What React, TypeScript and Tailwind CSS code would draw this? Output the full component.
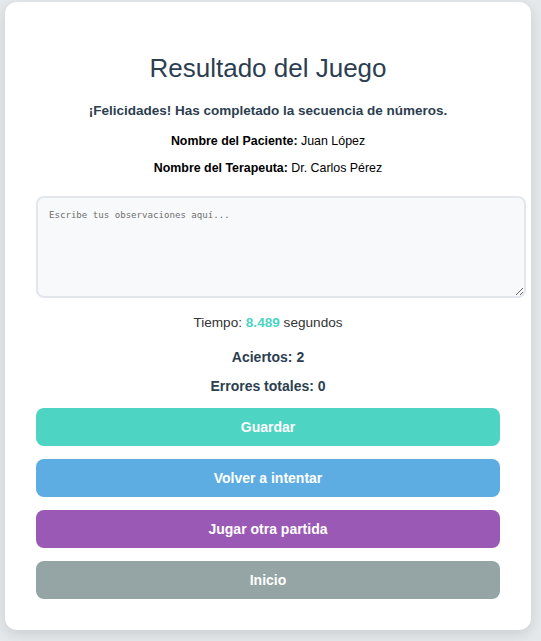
const buttons = [
  { label: "Guardar", cls: "bg-[#4dd4c3]" },
  { label: "Volver a intentar", cls: "bg-[#5dade2]" },
  { label: "Jugar otra partida", cls: "bg-[#9b59b6]" },
  { label: "Inicio", cls: "bg-[#95a5a6]" },
];

const App = () => {
  return (
    <div className="min-h-screen bg-[#e6e9ec] pl-[5px] pr-[10px] pt-[2px] font-['Liberation_Sans',Arial,sans-serif]">
      <div className="w-[526px] rounded-[12px] bg-white pl-[31px] pr-[31px] pt-[51px] pb-[31px] shadow-[0_4px_14px_rgba(0,0,0,0.12)]">
        <h2 className="text-center text-[26px] leading-[30px] text-[#2c3e50]">
          Resultado del Juego
        </h2>
        <p className="mt-[18px] text-center text-[13.5px] font-bold leading-[20px] text-[#2c3e50]">
          ¡Felicidades! Has completado la secuencia de números.
        </p>
        <p className="mt-[12px] text-center text-[12.4px] leading-[16px] text-black">
          <strong>Nombre del Paciente:</strong> Juan López
        </p>
        <p className="mt-[11px] text-center text-[12.4px] leading-[16px] text-black">
          <strong>Nombre del Terapeuta:</strong> Dr. Carlos Pérez
        </p>
        <textarea
          placeholder="Escribe tus observaciones aquí..."
          className="mt-[20px] box-content block h-[76px] w-full rounded-[8px] border-2 border-[#e3e7eb] bg-[#f8f9fb] px-[11px] py-[11px] font-['DejaVu_Sans_Mono',monospace] text-[9.1px] leading-[12px] text-[#333] placeholder:text-[#6f6f6f] outline-none"
        />
        <p className="mt-[15px] text-center text-[13.6px] leading-[20px] text-[#333]">
          Tiempo: <span className="font-bold text-[#4dd4c3]">8.489</span> segundos
        </p>
        <p className="mt-[14px] text-center text-[14px] font-bold leading-[20px] text-[#2c3e50]">
          Aciertos: 2
        </p>
        <p className="mt-[9px] text-center text-[14px] font-bold leading-[20px] text-[#2c3e50]">
          Errores totales: 0
        </p>
        <div className="mt-[12px] flex flex-col gap-[13px]">
          {buttons.map((b) => (
            <button
              key={b.label}
              className={`h-[38px] w-full rounded-[8px] text-[14px] font-bold text-white ${b.cls}`}
            >
              {b.label}
            </button>
          ))}
        </div>
      </div>
    </div>
  );
};

export default App;
